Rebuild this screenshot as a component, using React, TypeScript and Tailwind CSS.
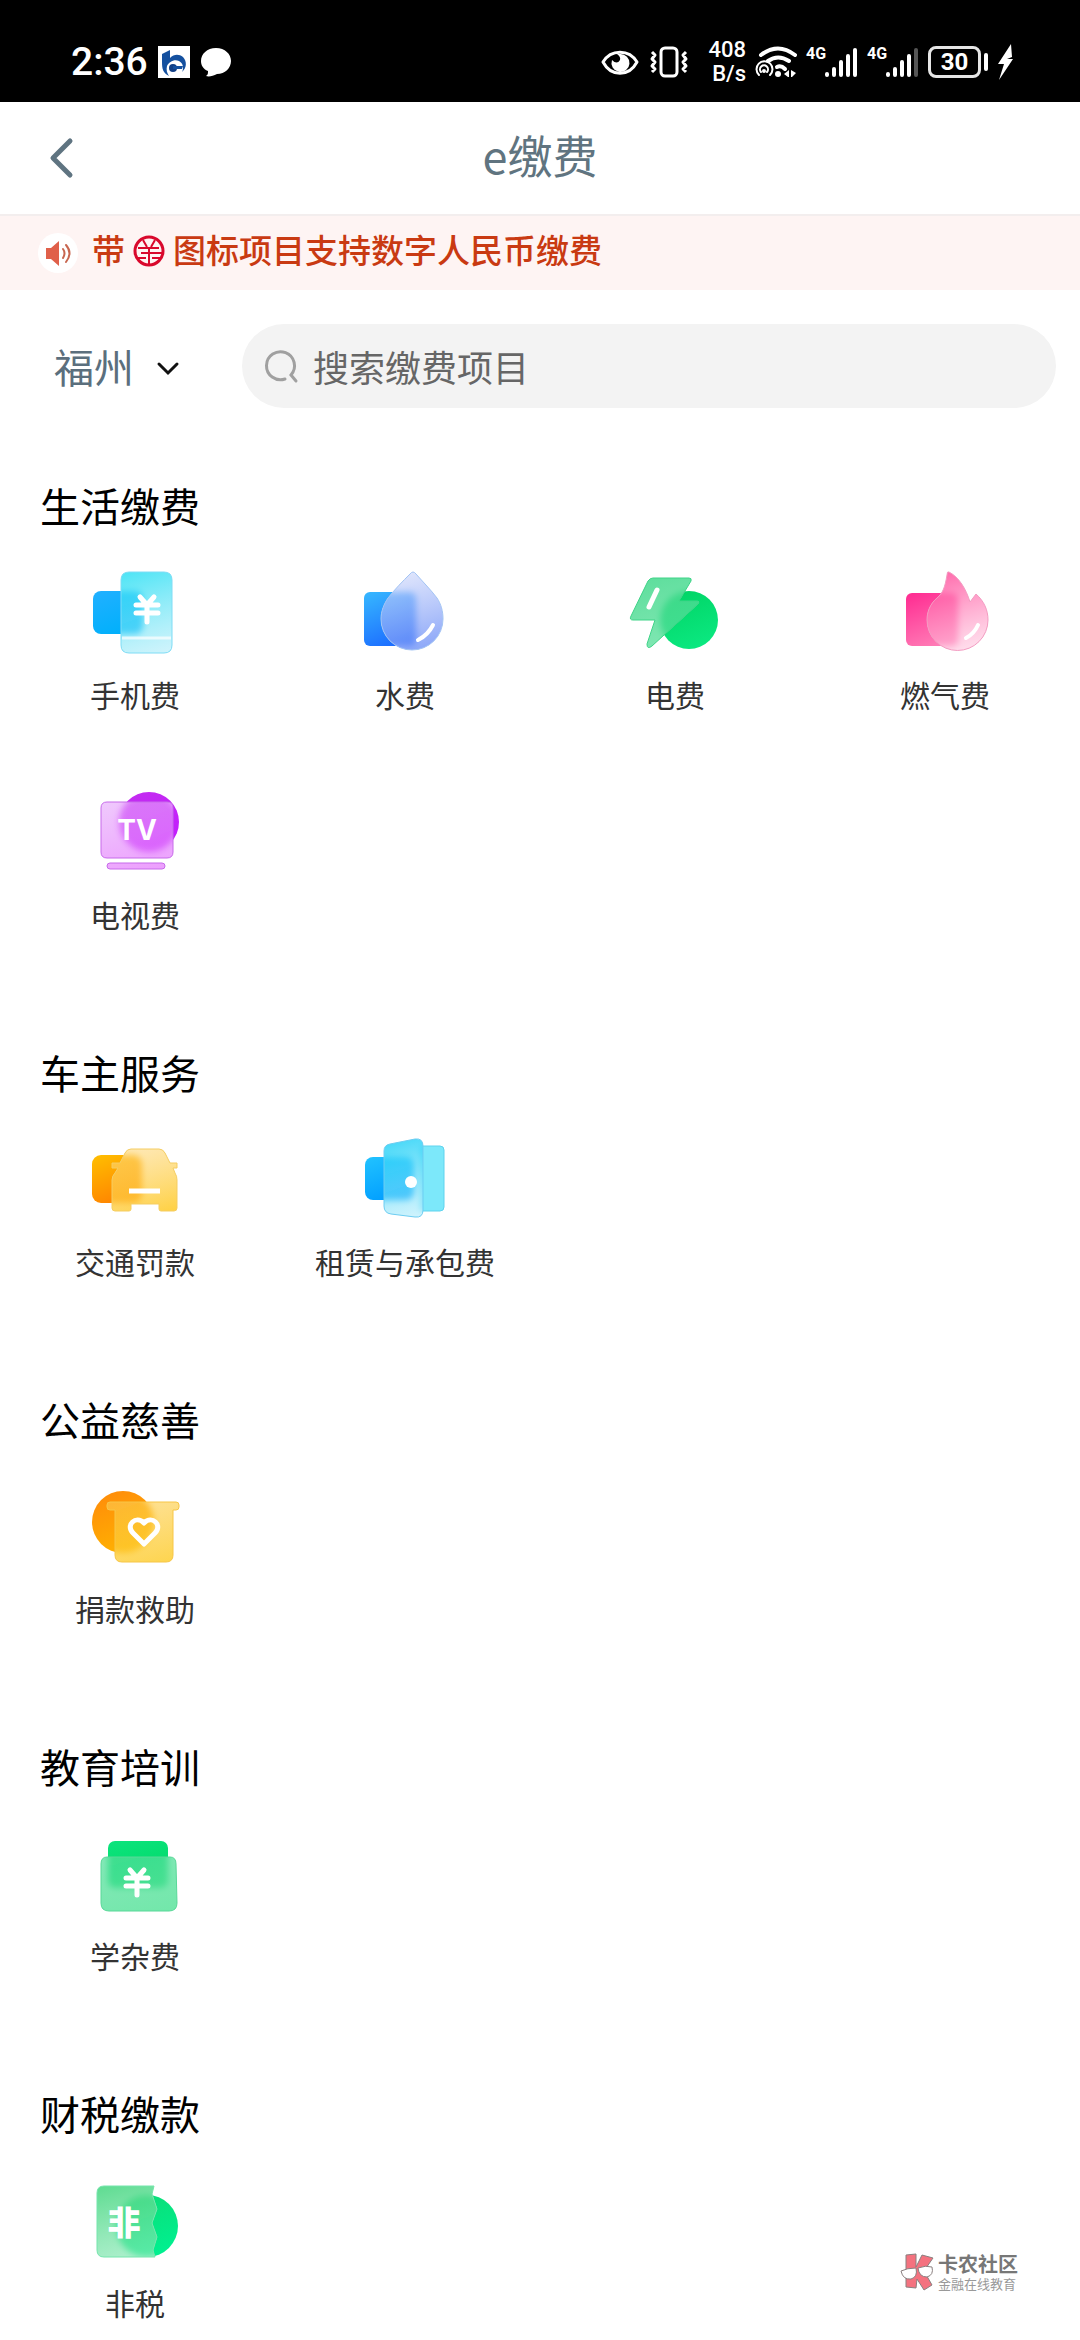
import type { ReactNode } from 'react'

interface GlassProps {
  id: string
  back: ReactNode
  front: string
  backStops: [string, string]
  frontStops: [string, string]
  edge: string
  children?: ReactNode
}

// Solid shape behind, frosted shape in front; the part behind the glass is blurred
function Glass({ id, back, front, backStops, frontStops, edge, children }: GlassProps) {
  return (
    <svg viewBox="0 0 96 96" className="w-24 h-24" aria-hidden="true">
      <defs>
        <linearGradient id={`${id}-back`} x1="0.2" y1="0" x2="0.6" y2="1">
          <stop offset="0" stopColor={backStops[0]} />
          <stop offset="1" stopColor={backStops[1]} />
        </linearGradient>
        <linearGradient id={`${id}-front`} x1="0.3" y1="0" x2="0.6" y2="1">
          <stop offset="0" stopColor={frontStops[0]} />
          <stop offset="1" stopColor={frontStops[1]} />
        </linearGradient>
        <filter id={`${id}-blur`} x="-30%" y="-30%" width="160%" height="160%">
          <feGaussianBlur stdDeviation="3" />
        </filter>
        <clipPath id={`${id}-clip`}>
          <path d={front} />
        </clipPath>
      </defs>
      <g fill={`url(#${id}-back)`}>{back}</g>
      <g clipPath={`url(#${id}-clip)`}>
        <rect width="96" height="96" fill="#fff" />
        <g fill={`url(#${id}-back)`} filter={`url(#${id}-blur)`}>{back}</g>
        <rect width="96" height="96" fill={`url(#${id}-front)`} />
      </g>
      <path d={front} fill="none" stroke={edge} strokeWidth="1" strokeLinejoin="round" />
      {children}
    </svg>
  )
}

function Yen({ x, y }: { x: number; y: number }) {
  return (
    <g transform={`translate(${x} ${y})`} fill="none" stroke="#fff" strokeWidth="5" strokeLinecap="round" strokeLinejoin="round">
      <path d="M6 2 13 10 20 2M13 10V27M2 10H24M2 18H24" />
    </g>
  )
}

function PhoneIcon() {
  return (
    <Glass
      id="phone"
      back={<rect x="6" y="26" width="50" height="43" rx="8" />}
      front="M42 7H77Q85 7 85 15V80Q85 88 77 88H42Q34 88 34 80V15Q34 7 42 7Z"
      backStops={['#1fb0ff', '#00b0fb']}
      frontStops={['#10dcf2d0', '#a8eaf988']}
      edge="#7fdcf5"
    >
      <path d="M35 73H84" stroke="#fff" strokeOpacity="0.7" strokeWidth="3" />
      <Yen x={47} y={30} />
    </Glass>
  )
}

function WaterIcon() {
  return (
    <Glass
      id="water"
      back={<rect x="7" y="27" width="52" height="54" rx="6" />}
      front="M53 9Q56 5 59 9C66 17 74 25 80 33C84 39 86 46 86 54A31 31 0 0 1 24 54C24 46 27 39 31 33C38 24 46 16 53 9Z"
      backStops={['#35b3ff', '#1c6cff']}
      frontStops={['#dde3fba0', '#5f85f6c8']}
      edge="#a3c4f4"
    >
      <path d="M76 60Q71 70 61 75" fill="none" stroke="#fff" strokeWidth="4" strokeLinecap="round" />
    </Glass>
  )
}

function PowerIcon() {
  return (
    <Glass
      id="power"
      back={<circle cx="62" cy="55" r="29" />}
      front="M26 13H62Q65 13 64 16L52 36H70Q73 36 71 39L25 81Q20 85 20 79L28 55H6Q2 55 4 51L21 16Q23 13 26 13Z"
      backStops={['#00d465', '#0be880']}
      frontStops={['#43d88ce0', '#5ae09cb8']}
      edge="#3fd488"
    >
      <path d="M30 25 22 42" stroke="#fff" strokeWidth="5" strokeLinecap="round" />
    </Glass>
  )
}

function GasIcon() {
  return (
    <Glass
      id="gas"
      back={<rect x="9" y="28" width="52" height="53" rx="6" />}
      front="M52 7C62 12 69 24 73 37L79 29C87 36 91 45 91 55A30 30 0 0 1 30 55C30 47 33 39 40 33C46 28 48 22 50 10Q50 6 52 7Z"
      backStops={['#ff2f93', '#ff7cb6']}
      frontStops={['#ff3d93e0', '#ffd0e490']}
      edge="#f39cc2"
    >
      <path d="M81 60Q77 69 69 73" fill="none" stroke="#fff" strokeWidth="4" strokeLinecap="round" />
    </Glass>
  )
}

function TvIcon() {
  return (
    <Glass
      id="tv"
      back={<circle cx="62" cy="37" r="30" />}
      front="M20 17H80Q86 17 86 23V67Q86 73 80 73H20Q14 73 14 67V23Q14 17 20 17ZM23 78H75A3 3 0 0 1 75 84H23A3 3 0 0 1 23 78Z"
      backStops={['#c32cf0', '#c31cff']}
      frontStops={['#e6b0fb9c', '#e574fdb8']}
      edge="#c76bea"
    >
      <text x="50" y="55" textAnchor="middle" fontSize="28" fontWeight="700" fill="#fff" fontFamily="Inter, sans-serif">TV</text>
    </Glass>
  )
}

function CarIcon() {
  return (
    <Glass
      id="car"
      back={<rect x="5" y="23" width="50" height="48" rx="9" />}
      front="M44 17H72Q76 17 78 21L83 31H90V36H86L88 41Q90 44 90 48V76Q90 79 87 79H74Q72 79 72 77V72H44V77Q44 79 42 79H28Q25 79 25 76V48Q25 44 28 41L31 36H25V31H33L38 21Q40 17 44 17Z"
      backStops={['#ffbb00', '#ff8200']}
      frontStops={['#fddc9880', '#ffc614dc']}
      edge="#f5cd62"
    >
      <path d="M42 59H73" stroke="#fff" strokeWidth="5" />
    </Glass>
  )
}

function DoorIcon() {
  return (
    <Glass
      id="door"
      back={
        <>
          <rect x="8" y="25" width="49" height="43" rx="8" />
          <path d="M64 14H83Q87 14 87 18V75Q87 79 83 79H64Z" fill="#7ce8fa" stroke="#5fd3ee" />
        </>
      }
      front="M33 12 58 7Q66 6 66 14V78Q66 86 58 85L34 82Q27 81 27 74V19Q27 13 33 12Z"
      backStops={['#1fc0ff', '#009dff']}
      frontStops={['#08ccf6d8', '#b8ecfc80']}
      edge="#6ccdf2"
    >
      <circle cx="54" cy="50" r="6" fill="#fff" />
    </Glass>
  )
}

function DonateIcon() {
  return (
    <Glass
      id="donate"
      back={<circle cx="36" cy="43" r="31" />}
      front="M23 23H89Q92 23 92 26V28Q92 31 89 31H86V76Q86 83 79 83H35Q28 83 28 76V31H23Q20 31 20 28V26Q20 23 23 23Z"
      backStops={['#ff8c0a', '#ffb300']}
      frontStops={['#fdcf6088', '#fdca20d0']}
      edge="#f7c646"
    >
      <path
        d="M57 65 46 54C38 46 49 36 57 44C65 36 76 46 68 54Z"
        fill="none"
        stroke="#fff"
        strokeWidth="5"
        strokeLinejoin="round"
      />
    </Glass>
  )
}

function TuitionIcon() {
  return (
    <Glass
      id="tuition"
      back={<rect x="21" y="15" width="60" height="47" rx="7" />}
      front="M20 31H83Q89 31 89 38L90 77Q90 85 82 85H22Q14 85 14 77V38Q14 31 20 31Z"
      backStops={['#0be37b', '#00d868']}
      frontStops={['#4cdc98a0', '#5ee49ee0']}
      edge="#58d898"
    >
      <Yen x={37} y={42} />
    </Glass>
  )
}

function TaxIcon() {
  return (
    <Glass
      id="tax"
      back={<circle cx="60" cy="53" r="31" />}
      front="M17 13H67L65 21 70 36 65 50 70 64 66 77 68 84H17Q10 84 10 77V20Q10 13 17 13Z"
      backStops={['#0bdc75', '#00f090']}
      frontStops={['#3ed47ae0', '#8feabba0']}
      edge="#74e5ac"
    >
      <text x="37" y="62" textAnchor="middle" fontSize="33" fontWeight="900" fill="#fff" fontFamily="'Noto Sans CJK SC', sans-serif">非</text>
    </Glass>
  )
}

const SECTIONS = [
  {
    title: '生活缴费',
    items: [
      { label: '手机费', icon: <PhoneIcon /> },
      { label: '水费', icon: <WaterIcon /> },
      { label: '电费', icon: <PowerIcon /> },
      { label: '燃气费', icon: <GasIcon /> },
      { label: '电视费', icon: <TvIcon /> },
    ],
  },
  {
    title: '车主服务',
    items: [
      { label: '交通罚款', icon: <CarIcon /> },
      { label: '租赁与承包费', icon: <DoorIcon /> },
    ],
  },
  { title: '公益慈善', items: [{ label: '捐款救助', icon: <DonateIcon /> }] },
  { title: '教育培训', items: [{ label: '学杂费', icon: <TuitionIcon /> }] },
  { title: '财税缴款', items: [{ label: '非税', icon: <TaxIcon /> }] },
]

function Signal({ weak = false }: { weak?: boolean }) {
  return (
    <div className="flex w-[52px] h-8 items-start">
      <span className="w-[18px] text-base leading-4 font-bold">4G</span>
      <svg viewBox="0 0 34 32" className="w-[34px] h-8" strokeWidth="4" strokeLinecap="round" stroke="#fff">
        <path d="M3 28V29M10 23V29M17 16V29M24 10V29" />
        <path d="M31 4V29" stroke={weak ? '#555' : '#fff'} />
      </svg>
    </div>
  )
}

function StatusBar() {
  return (
    <div className="flex items-center justify-between h-[102px] pt-[21px] pl-[71px] pr-[66px] bg-black text-white font-[Roboto,sans-serif]">
      <div className="flex items-center gap-[10px]">
        <span className="text-[39px] leading-10 font-medium">2:36</span>
        <svg viewBox="0 0 32 32" className="w-8 h-8">
          <rect width="32" height="32" fill="#fff" />
          <path d="M4 8 12 4V12C16 8 21 8 25 11C29 15 29 22 24 26C26 22 25 17 21 15C16 13 11 16 9 20C8 24 9 27 11 30C5 27 4 23 4 16Z" fill="#14509f" />
          <circle cx="15" cy="22" r="4" fill="#123f86" />
          <path d="M15 20H25L24 23H15Z" fill="#14509f" />
        </svg>
        <svg viewBox="0 0 32 32" className="w-8 h-8">
          <path d="M16 2C25 2 31 8 31 15S25 28 17 28C13 30 9 31 6 30C8 29 8 27 8 25C3 23 1 19 1 15C1 8 7 2 16 2Z" fill="#fff" />
        </svg>
      </div>
      <div className="flex items-center gap-[9px]">
        <svg viewBox="0 0 40 32" className="w-10 h-8" fill="none" stroke="#fff" strokeWidth="3">
          <path d="M3 16C11 3 29 3 37 16C29 31 11 31 3 16Z" strokeLinejoin="round" />
          <path d="M20 8A9 9 0 1 1 12 14Q17 19 20 14Q21 11 17 8Z" fill="#fff" stroke="none" />
        </svg>
        <svg viewBox="0 0 40 32" className="w-10 h-8" fill="none" stroke="#fff" strokeWidth="3" strokeLinejoin="round">
          <rect x="12" y="2" width="16" height="28" rx="4" />
          <path d="M3 6 6 9 3 13 6 16 3 20 6 23 3 26M37 6 34 9 37 13 34 16 37 20 34 23 37 26" />
        </svg>
        <div className="w-12 text-right text-[22px] leading-6 font-medium">
          <div>408</div>
          <div>B/s</div>
        </div>
        <svg viewBox="0 0 42 32" className="w-[42px] h-8" fill="none" stroke="#fff" strokeLinecap="round">
          <path d="M6 9Q23-4 40 9M13 15Q23 8 34 15" strokeWidth="4" />
          <path d="M22 21Q26 19 30 23" strokeWidth="4" />
          <path d="M4 29A8 8 0 1 1 15 29M6 26A4 4 0 1 1 12 26" strokeWidth="2" />
          <circle cx="9" cy="25" r="2" fill="#fff" stroke="none" />
          <circle cx="23" cy="28" r="3" fill="#fff" stroke="none" />
          <path d="M34 24V31H33L29 28ZM36 24 41 27 37 31H36Z" fill="#fff" stroke="none" />
        </svg>
        <Signal />
        <Signal weak />
        <div className="flex w-[60px] items-center gap-[3px]">
          <div className="flex flex-1 h-8 items-center justify-center rounded-lg border-[3px] border-white/90 text-2xl font-bold">30</div>
          <div className="w-1 h-[18px] rounded-sm bg-white" />
        </div>
        <svg viewBox="0 0 17 36" className="w-[17px] h-9">
          <path d="M14 0 1 20H7L2 36 16 15H10L15 13Z" fill="#fff" />
        </svg>
      </div>
    </div>
  )
}

function Notice() {
  return (
    <div className="flex items-center gap-[14px] h-[76px] pl-[38px] border-t-2 border-[#f3eeee] bg-[#fef4f3]">
      <span className="flex items-center justify-center w-10 h-10 rounded-full bg-white">
        <svg viewBox="0 0 28 28" className="w-7 h-7">
          <path d="M2 9H7L15 2V27L7 20H2Z" fill="#e0604a" />
          <path d="M19 10Q22 14 19 19M22 6Q29 14 22 23" fill="none" stroke="#c8664f" strokeWidth="2" strokeLinecap="round" />
        </svg>
      </span>
      <p className="flex items-center gap-2 pb-2 text-[33px] leading-10 font-medium text-[#c93a12]">
        带
        <svg viewBox="0 0 32 32" className="w-8 h-8 mt-1" fill="none" stroke="#d9082c" strokeWidth="3">
          <circle cx="16" cy="16" r="14" />
          <path d="M10 5 14 12M22 5 18 12M5 13H26M8 18H30M3 23H13M19 23H28M16 13V30" strokeWidth="2" />
        </svg>
        图标项目支持数字人民币缴费
      </p>
    </div>
  )
}

export default function App() {
  return (
    <div className="relative min-h-screen overflow-hidden bg-white font-['Noto_Sans_CJK_SC',sans-serif]">
      <StatusBar />

      {/* Header */}
      <header className="grid grid-cols-[1fr_auto_1fr] items-center h-28">
        <button type="button" aria-label="返回" className="justify-self-start pl-[48px]">
          <svg viewBox="0 0 28 44" className="w-7 h-11">
            <path d="M22 5 5 22 22 39" fill="none" stroke="#5f7481" strokeWidth="5" strokeLinecap="round" strokeLinejoin="round" />
          </svg>
        </button>
        <h1 className="pb-[6px] text-[45px] leading-[56px] text-[#607480]">e缴费</h1>
      </header>

      <Notice />

      {/* City and search */}
      <div className="flex items-center gap-[62px] pt-[34px] pl-[54px] pr-6">
        <label className="flex items-center">
          <select aria-label="城市" className="w-[126px] appearance-none bg-transparent text-[40px] leading-[60px] text-[#5b6f7d]">
            <option>福州</option>
          </select>
          <svg viewBox="0 0 24 24" className="w-6 h-6 -ml-6 mt-1 pointer-events-none">
            <path d="M3 8 12 17 21 8" fill="none" stroke="#111" strokeWidth="3" strokeLinecap="round" />
          </svg>
        </label>
        <label className="flex flex-1 items-center gap-[14px] h-[84px] px-[21px] rounded-full bg-[#f3f3f3]">
          <svg viewBox="0 0 36 36" className="w-9 h-9" fill="none" stroke="#a0a0a0" strokeWidth="3" strokeLinecap="round">
            <path d="M22 31A14 14 0 1 1 28 27L33 33" />
          </svg>
          <input
            type="search"
            aria-label="搜索缴费项目"
            placeholder="搜索缴费项目"
            className="flex-1 min-w-0 bg-transparent text-[36px] leading-[52px] outline-none placeholder:text-[#666]"
          />
        </label>
      </div>

      <main className="flex flex-col gap-[108px] pt-[67px]">
        {SECTIONS.map((section) => (
          <section key={section.title}>
            <h2 className="pl-10 text-[40px] leading-[60px] text-black">{section.title}</h2>
            <div className="grid grid-cols-4 gap-y-[71px] pt-[30px]">
              {section.items.map((item) => (
                <button key={item.label} type="button" className="flex flex-col items-center gap-[13px]">
                  {item.icon}
                  <span className="text-[30px] leading-10 text-[#333] whitespace-nowrap">{item.label}</span>
                </button>
              ))}
            </div>
          </section>
        ))}
      </main>

      {/* Community mark */}
      <div className="absolute right-[62px] bottom-12 flex items-center gap-1">
        <svg viewBox="0 0 34 38" className="w-[34px] h-[38px]" stroke="#8a8080" strokeWidth="1" strokeLinejoin="round">
          <path d="M6 2 16 1V14L22 2 33 5 24 18 32 32 24 37 17 26 16 35 6 34Z" fill="#f4727f" />
          <path d="M1 18Q7 15 16 15Q18 24 11 26Q3 27 1 18ZM18 15Q26 12 32 14Q34 22 27 24Q19 24 18 15Z" fill="#fff" />
        </svg>
        <div>
          <div className="text-xl leading-6 font-bold text-[#777]">卡农社区</div>
          <div className="text-[13px] leading-4 text-[#999]">金融在线教育</div>
        </div>
      </div>
    </div>
  )
}
